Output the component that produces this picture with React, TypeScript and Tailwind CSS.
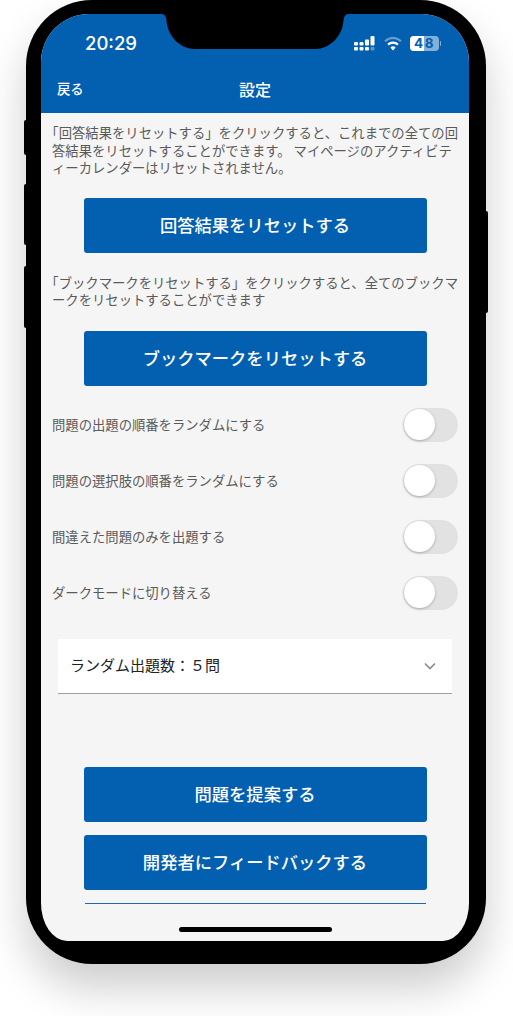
const font = "font-['Noto_Sans_CJK_JP','Noto_Sans',sans-serif]";

function BlueButton({ label }: { label: string }) {
  return (
    <button
      type="button"
      className="flex h-[55px] w-[343px] items-center justify-center rounded-[3px] bg-[#0360b0] text-[17.3px] font-medium text-white"
    >
      {label}
    </button>
  );
}

function ToggleRow({ label }: { label: string }) {
  return (
    <div className="flex h-[56px] items-center justify-between px-[11px]">
      <span className="text-[13.33px] text-[#5a5a5a]">{label}</span>
      <div className="flex h-[34px] w-[55px] items-center rounded-full bg-[#e2e2e2] pl-[1px]">
        <div className="h-[31px] w-[31px] rounded-full bg-white shadow-[0_1px_3px_rgba(0,0,0,0.25)]" />
      </div>
    </div>
  );
}

function StatusIcons() {
  return (
    <div className="flex items-center gap-[8px]">
      <svg width="22" height="15" viewBox="0 0 22 15" fill="white">
        <rect x="0" y="6" width="4" height="3.5" rx="1" />
        <rect x="5.5" y="6" width="4" height="3.5" rx="1" />
        <rect x="11" y="3.5" width="4" height="6" rx="1" />
        <rect x="16.5" y="0" width="4" height="9.5" rx="1" />
        <rect x="0" y="11" width="4" height="3.5" rx="1" />
        <rect x="5.5" y="11" width="4" height="3.5" rx="1" />
        <rect x="11" y="11" width="4" height="3.5" rx="1" />
        <rect x="16.5" y="11" width="4" height="3.5" rx="1" opacity="0.35" />
      </svg>
      <svg width="18" height="14" viewBox="0 0 18 14" fill="none" stroke="white" strokeWidth="2.2">
        <path d="M1 4.2a11.5 11.5 0 0 1 16 0" opacity="0.4" />
        <path d="M4 7.6a7.2 7.2 0 0 1 10 0" />
        <path d="M9 13.5 6.4 10.6a3.6 3.6 0 0 1 5.2 0Z" fill="white" stroke="none" />
      </svg>
      <div className="flex items-center gap-[1px]">
        <div className="relative flex h-[15px] w-[29px] items-center justify-center overflow-hidden rounded-[4px] bg-white/50">
          <div className="absolute left-0 top-0 h-full w-[14px] bg-white" />
          <span className="relative font-['Inter',sans-serif] text-[13.5px] font-bold tracking-[1.5px] text-[#0360b0]">48</span>
        </div>
        <div className="h-[5px] w-[1px] rounded-r bg-white/50" />
      </div>
    </div>
  );
}

const bodyText =
  "pl-[11px] pr-[10px] text-[13.33px] leading-[17.5px] text-[#5a5a5a] [line-break:loose] [text-spacing-trim:trim-start]";

export default function App() {
  return (
    <div className={`h-[1016px] w-[513px] overflow-hidden bg-white pl-[26px] ${font}`}>
      <div className="relative h-[964px] w-[460px] rounded-[66px] bg-black pb-[23px] pl-[15px] pr-[17px] pt-[14px] shadow-[0_24px_44px_rgba(0,0,0,0.2)]">
        {/* side buttons */}
        <div className="absolute left-[-2px] top-[120px] h-[35px] w-[2px] rounded-l bg-black" />
        <div className="absolute left-[-2px] top-[184px] h-[61px] w-[2px] rounded-l bg-black" />
        <div className="absolute left-[-2px] top-[266px] h-[62px] w-[2px] rounded-l bg-black" />
        <div className="absolute right-[-2px] top-[211px] h-[102px] w-[2px] rounded-r bg-black" />

        <div className="relative flex h-full flex-col overflow-hidden rounded-bl-[26px_38px] rounded-br-[26px_38px] rounded-t-[48px] bg-[#f5f5f5]">
          {/* notch */}
          <svg className="absolute left-[121px] top-0" width="186" height="35" viewBox="0 0 186 35" fill="black">
            <path d="M0 0Q4 0 4.5 7C6 24 20 35 32 35H154C166 35 180 24 181.5 7Q182 0 186 0Z" />
          </svg>

          <header className="h-[99px] shrink-0 bg-[#0360b0] text-white">
            <div className="flex h-[58px] items-center justify-between pl-[44px] pr-[28px] pt-[1px]">
              <span className="font-['Inter',sans-serif] text-[18.5px] font-medium">20:29</span>
              <StatusIcons />
            </div>
            <div className="relative flex h-[34px] items-center justify-center">
              <span className="absolute left-[16px] text-[13.33px] font-medium">戻る</span>
              <span className="text-[16px] font-medium">設定</span>
            </div>
          </header>

          <main className="flex min-h-0 flex-1 flex-col">
            <p className={`pt-[11px] ${bodyText}`}>
              「回答結果をリセットする」をクリックすると、これまでの全ての回答結果をリセットすることができます。 マイページのアクティビティーカレンダーはリセットされません。
            </p>
            <div className="mt-[21px] flex justify-center">
              <BlueButton label="回答結果をリセットする" />
            </div>
            <p className={`pt-[21px] ${bodyText}`}>
              「ブックマークをリセットする」をクリックすると、全てのブックマークをリセットすることができます
            </p>
            <div className="mt-[22px] flex justify-center">
              <BlueButton label="ブックマークをリセットする" />
            </div>

            <div className="mt-[11px]">
              <ToggleRow label="問題の出題の順番をランダムにする" />
              <ToggleRow label="問題の選択肢の順番をランダムにする" />
              <ToggleRow label="間違えた問題のみを出題する" />
              <ToggleRow label="ダークモードに切り替える" />
            </div>

            <div className="ml-[17px] mt-[18px] flex h-[55px] w-[394px] items-center justify-between border-b border-[#a0a0a0] bg-white pl-[12px] pr-[15px]">
              <span className="text-[15px] text-[#222]">ランダム出題数：５問</span>
              <svg width="14" height="14" viewBox="0 0 14 14" fill="none" stroke="#8a8a8a" strokeWidth="1.6">
                <path d="M2 4.5 7 9.5 12 4.5" />
              </svg>
            </div>

            <div className="mt-[73px] flex flex-col items-center gap-[13px]">
              <BlueButton label="問題を提案する" />
              <BlueButton label="開発者にフィードバックする" />
              <div className="h-[1px] w-[341px] bg-[#1d68b3]" />
            </div>
          </main>

          {/* home indicator */}
          <div className="absolute bottom-[9px] left-[138px] h-[5px] w-[153px] rounded-full bg-black" />
        </div>
      </div>
    </div>
  );
}
